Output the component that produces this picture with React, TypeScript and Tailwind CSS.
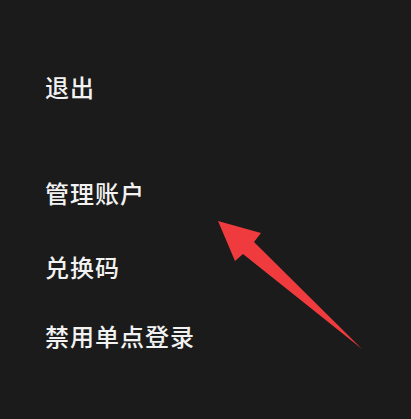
export default function App() {
  const items = [
    { label: "退出", mt: "mt-[75px]" },
    { label: "管理账户", mt: "mt-[82px]" },
    { label: "兑换码", mt: "mt-[50px]" },
    { label: "禁用单点登录", mt: "mt-[45px]" },
  ];

  return (
    <div
      className="relative h-[419px] w-[411px] overflow-hidden bg-[#1b1b1b]"
      style={{ fontFamily: '"Noto Sans CJK SC", "Noto Sans", sans-serif' }}
    >
      <ul className="flex flex-col pl-[45px]">
        {items.map((it) => (
          <li
            key={it.label}
            className={`${it.mt} text-[24px] font-medium leading-[24px] tracking-[1px] text-[#f2f2f2]`}
          >
            {it.label}
          </li>
        ))}
      </ul>

      {/* red annotation arrow */}
      <svg
        className="absolute left-0 top-0"
        width="411"
        height="419"
        viewBox="0 0 411 419"
      >
        <polygon
          points="218,221 261,233 254,242 362,349 243,254 235,261"
          fill="#ef3b3d"
        />
      </svg>
    </div>
  );
}
